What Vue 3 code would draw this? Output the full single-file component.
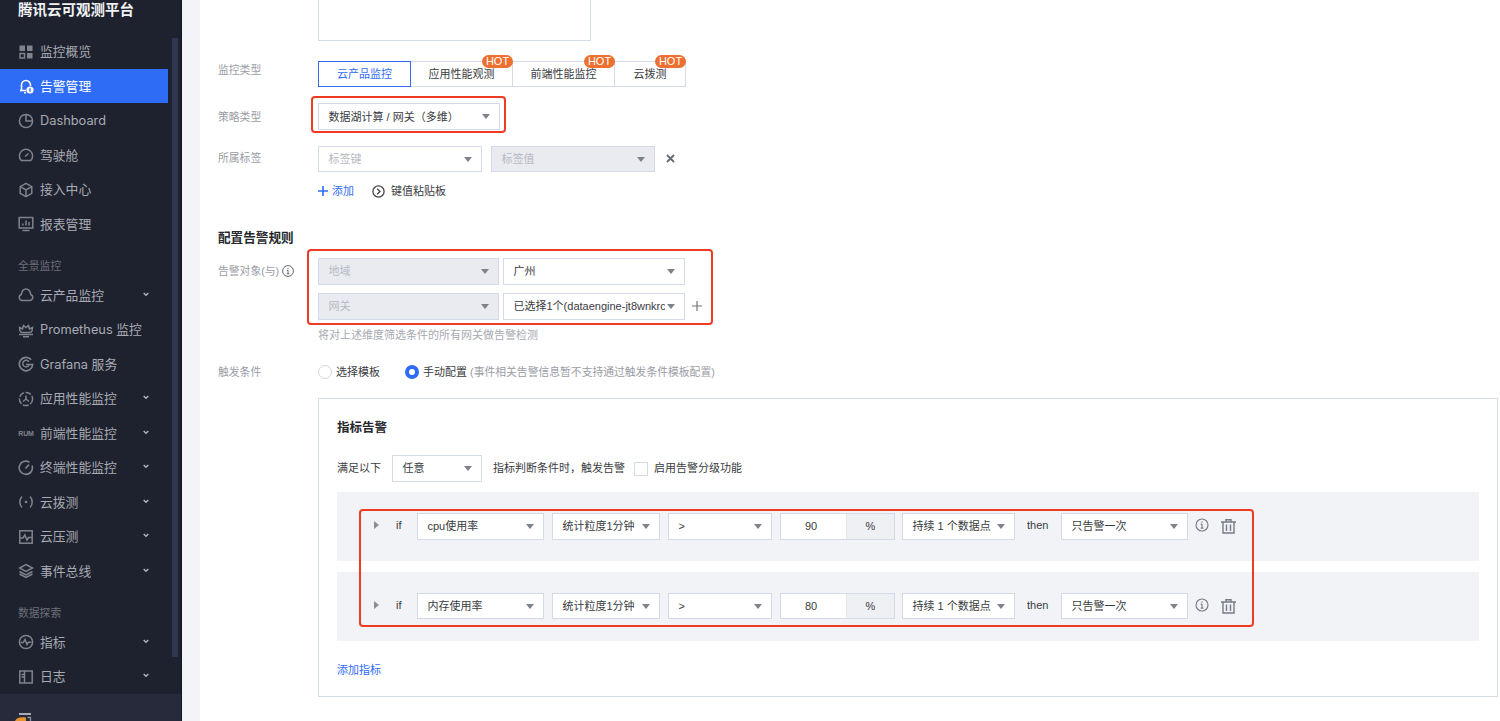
<script setup>
const group1 = [
  { t: '监控概览', i: 'grid' }, { t: '告警管理', i: 'bell', active: true }, { t: 'Dashboard', i: 'pie' },
  { t: '驾驶舱', i: 'gauge' }, { t: '接入中心', i: 'cube' }, { t: '报表管理', i: 'screen' }
]
const group2 = [
  { t: '云产品监控', i: 'cloud', arrow: true }, { t: 'Prometheus 监控', i: 'prom' }, { t: 'Grafana 服务', i: 'graf' },
  { t: '应用性能监控', i: 'apm', arrow: true }, { t: '前端性能监控', i: 'rum', arrow: true }, { t: '终端性能监控', i: 'dial', arrow: true },
  { t: '云拨测', i: 'probe', arrow: true }, { t: '云压测', i: 'pulse', arrow: true }, { t: '事件总线', i: 'layers', arrow: true }
]
const group3 = [
  { t: '指标', i: 'metric', arrow: true }, { t: '日志', i: 'log', arrow: true }
]
const sections = [
  { title: '', items: group1 }, { title: '全景监控', items: group2 }, { title: '数据探索', items: group3 }
]
const tabs = [
  { t: '云产品监控', w: 93, active: true }, { t: '应用性能观测', w: 102, hot: true },
  { t: '前端性能监控', w: 102, hot: true }, { t: '云拨测', w: 71, hot: true }
]
const rules = [
  { metric: 'cpu使用率', value: '90' }, { metric: '内存使用率', value: '80' }
]
</script>

<template>
  <div class="page">
    <aside class="side">
      <div class="brand">腾讯云可观测平台</div>
      <nav class="nav">
        <template v-for="s in sections" :key="s.title">
          <div v-if="s.title" class="sec">{{ s.title }}</div>
          <div v-for="it in s.items" :key="it.t" class="item" :class="{ on: it.active }">
            <span class="ico">
              <svg v-if="it.i !== 'rum'" width="16" height="16" viewBox="0 0 16 16" fill="none" stroke="currentColor" stroke-width="1.500">
                <template v-if="it.i === 'grid'">
                  <rect x="1.500" y="1.500" width="5.500" height="5.500" fill="currentColor" stroke="none" />
                  <rect x="9" y="1.500" width="5.500" height="5.500" fill="currentColor" stroke="none" />
                  <rect x="2" y="9.500" width="4.500" height="4.500" />
                  <rect x="9" y="9" width="5.500" height="5.500" fill="currentColor" stroke="none" />
                </template>
                <template v-else-if="it.i === 'bell'">
                  <path d="M2 12.500h1.500V7a4.500 4.500 0 0 1 9 0v1" stroke-width="1.600" />
                  <path d="M2 12.500h6M6 14.800h2" stroke-width="1.600" />
                  <circle cx="12" cy="12" r="3.600" fill="currentColor" stroke="none" />
                  <path d="M12 10.200v3.600" stroke="#2e6cf6" stroke-width="1.300" />
                </template>
                <template v-else-if="it.i === 'pie'">
                  <circle cx="8" cy="8" r="6.600" />
                  <path d="M8 1.500V8h6.500" />
                </template>
                <template v-else-if="it.i === 'gauge'">
                  <path d="M3.200 13.500h9.600a6.600 6.600 0 1 0-9.600 0z" />
                  <path d="M7 9.500l3.500-3" />
                </template>
                <template v-else-if="it.i === 'cube'">
                  <path d="M8 1.300l5.800 3.300v6.800L8 14.700l-5.800-3.300V4.600z" />
                  <path d="M2.200 4.600L8 8l5.800-3.400M8 8v6.700" />
                </template>
                <template v-else-if="it.i === 'screen'">
                  <rect x="1.200" y="1.500" width="13.600" height="10.500" />
                  <path d="M4.500 14.600h7M4.800 9.500V7.500M8 9.500V4.500M11 9.500V6" />
                </template>
                <template v-else-if="it.i === 'cloud'">
                  <path d="M4.300 13.500a3.100 3.100 0 0 1-1-6C3.800 4 5.700 2 8 2s4.200 2 4.700 5.500a3.100 3.100 0 0 1-1 6z" />
                </template>
                <template v-else-if="it.i === 'prom'">
                  <path d="M1.500 5.500L4.500 7 5.500 3.500 8 5.500l2.500-2L11.500 7l3-1.500-.5 3.500c-.5 1-1.500 1.500-2.500 1.500h-7C3.500 10.500 2.500 10 2 9z" />
                  <path d="M1 12.400h14M5 14.700h6" />
                </template>
                <template v-else-if="it.i === 'graf'">
                  <path d="M13.200 3.800A6.700 6.700 0 1 0 14.700 8.500H8" stroke-width="1.700" />
                  <path d="M10.800 5.800A3.300 3.300 0 1 0 11 9" />
                </template>
                <template v-else-if="it.i === 'apm'">
                  <circle cx="8" cy="8" r="6.600" stroke-dasharray="6 1.600" />
                  <path d="M8 4.500V8l-3 2.500M8 8l3 2.500" />
                </template>
                <template v-else-if="it.i === 'dial'">
                  <path d="M11.500 2.300A6.600 6.600 0 1 0 14 5.500" stroke-width="1.600" />
                  <path d="M7.500 8.500L11 4.500" stroke-width="1.600" />
                </template>
                <template v-else-if="it.i === 'probe'">
                  <path d="M4 2.500a8 8 0 0 0 0 11M12 2.500a8 8 0 0 1 0 11" />
                  <circle cx="8" cy="8" r="1.300" fill="currentColor" stroke="none" />
                </template>
                <template v-else-if="it.i === 'pulse'">
                  <rect x="1.800" y="1.800" width="12.400" height="12.400" />
                  <path d="M2 9h3l1.800-3 2.200 5 1.500-2.500H14" />
                </template>
                <template v-else-if="it.i === 'layers'">
                  <path d="M8 1.500l6.500 3.500L8 8.500 1.500 5z" />
                  <path d="M1.500 8.500L8 12l6.500-3.500M1.500 11L8 14.500l6.500-3.500" />
                </template>
                <template v-else-if="it.i === 'metric'">
                  <circle cx="8" cy="8" r="6.600" />
                  <path d="M2.500 8.500h2.800L7 5.500l2 5 1.300-2.200h3" />
                </template>
                <template v-else-if="it.i === 'log'">
                  <rect x="1.800" y="2" width="12.400" height="12" />
                  <path d="M6.500 2v12M3.500 5.500h3M3.500 8h3" />
                </template>
              </svg>
              <em v-else class="rum">RUM</em>
            </span>
            <span class="lbl" :class="{ latin: it.t === 'Dashboard' }">{{ it.t }}</span>
            <svg v-if="it.arrow" class="chev" width="6" height="5" viewBox="0 0 6 5" fill="none" stroke="currentColor" stroke-width="1.300">
              <path d="M.7 1l2.300 2.300L5.300 1" />
            </svg>
          </div>
        </template>
      </nav>
      <div class="foot">
        <svg width="20" height="8" viewBox="0 0 20 8" fill="none">
          <path d="M0 8c1-3 5-4.500 11-3.500V8z" fill="#e8912f" />
          <path d="M4 1h12" stroke="#a6aab4" stroke-width="2" />
          <path d="M12.500 4.500h3.500M15.500 4v4" stroke="#8d919c" stroke-width="1.300" />
        </svg>
      </div>
      <div class="thumb"></div>
    </aside>
    <div class="gutter"></div>

    <main class="main">
      <div class="area"></div>

      <div class="row r-tabs">
        <label>监控类型</label>
        <div class="tabs">
          <div v-for="t in tabs" :key="t.t" class="tab" :class="{ act: t.active }" :style="{ width: t.w + 'px' }">
            {{ t.t }}
            <b v-if="t.hot" class="hot">HOT</b>
          </div>
        </div>
      </div>

      <div class="row r-strategy">
        <label>策略类型</label>
        <div class="hl hl-a">
          <div class="sel w182"><span>数据湖计算 / 网关（多维）</span><i></i></div>
        </div>
      </div>

      <div class="row r-tag">
        <label>所属标签</label>
        <div class="ctl">
          <div class="sel w164 ph"><span>标签键</span><i></i></div>
          <div class="sel w164 ph dis"><span>标签值</span><i></i></div>
          <svg class="x" width="9" height="9" viewBox="0 0 9 9" stroke="#666a73" stroke-width="1.800"><path d="M1 1l7 7M8 1L1 8" /></svg>
        </div>
      </div>

      <div class="row r-add">
        <span></span>
        <div class="ctl">
          <span class="blue addlink">
            <svg width="10" height="10" viewBox="0 0 10 10" stroke="#2e6cf6" stroke-width="1.600"><path d="M5 0v10M0 5h10" /></svg>
            添加
          </span>
          <span class="paste">
            <svg width="13" height="13" viewBox="0 0 13 13" fill="none" stroke="#444" stroke-width="1.300"><circle cx="6.500" cy="6.500" r="5.600" /><path d="M5.200 3.800L8 6.500 5.200 9.200" /></svg>
            键值粘贴板
          </span>
        </div>
      </div>

      <h3 class="head">配置告警规则</h3>

      <div class="row r-obj">
        <label class="lab-i">告警对象(与)
          <svg width="12" height="12" viewBox="0 0 12 12" fill="none" stroke="#666a73" stroke-width="1"><circle cx="6" cy="6" r="5.400" /><path d="M6 5.200v3.500M6 3v1.200M4.800 5.300H6M4.800 8.800h2.500" /></svg>
        </label>
        <div class="obj">
          <div class="hl hl-b">
            <div class="obj-row">
              <div class="sel w181 ph dis"><span>地域</span><i></i></div>
              <div class="sel w182"><span>广州</span><i></i></div>
            </div>
            <div class="obj-row">
              <div class="sel w181 ph dis"><span>网关</span><i></i></div>
              <div class="sel w182"><span class="clip">已选择1个(dataengine-jt8wnkrc</span><i></i></div>
              <svg class="plus" width="10" height="10" viewBox="0 0 10 10" stroke="#777" stroke-width="1.200"><path d="M5 0v10M0 5h10" /></svg>
            </div>
          </div>
          <p class="hint">将对上述维度筛选条件的所有网关做告警检测</p>
        </div>
      </div>

      <div class="row r-trig">
        <label>触发条件</label>
        <div class="ctl radios">
          <span class="radio"></span><span class="rt">选择模板</span>
          <span class="radio checked"></span><span class="rt">手动配置 <small>(事件相关告警信息暂不支持通过触发条件模板配置)</small></span>
        </div>
      </div>

      <section class="panel">
        <h4>指标告警</h4>
        <div class="cond">
          <span class="ct">满足以下</span>
          <div class="sel w90"><span>任意</span><i></i></div>
          <span class="ct c1">指标判断条件时，触发告警</span>
          <span class="check"></span>
          <span class="ct">启用告警分级功能</span>
        </div>
        <div class="hl hl-c">
          <div v-for="r in rules" :key="r.value" class="rule">
            <span class="tri"></span>
            <span class="if">if</span>
            <div class="sel w127"><span>{{ r.metric }}</span><i></i></div>
            <div class="sel w108"><span>统计粒度1分钟</span><i></i></div>
            <div class="sel w104"><span>&gt;</span><i></i></div>
            <div class="num"><span>{{ r.value }}</span><b>%</b></div>
            <div class="sel w113"><span>持续 1 个数据点</span><i></i></div>
            <span class="then">then</span>
            <div class="sel w127"><span>只告警一次</span><i></i></div>
            <svg class="info" width="14" height="14" viewBox="0 0 14 14" fill="none" stroke="#777b85" stroke-width="1.100"><circle cx="7" cy="7" r="6" /><path d="M7 6v4M7 3.500v1.300M5.700 6.100H7M5.700 10.100h2.700" /></svg>
            <svg class="trash" width="15" height="15" viewBox="0 0 15 15" fill="none" stroke="#777b85" stroke-width="1.400"><path d="M0 3h15M5 3V.8h5V3M2 3v11h11V3M5.500 5.500v6.500M9.500 5.500v6.500" /></svg>
          </div>
        </div>
        <a class="blue more">添加指标</a>
      </section>
    </main>
  </div>
</template>

<style scoped>
.page { display: flex; height: 721px; overflow: hidden; font-family: "Liberation Sans", "Noto Sans CJK SC", sans-serif; font-size: 11px; color: #3a3c42; background: #fff; }
.side { position: relative; width: 182px; flex: none; display: flex; flex-direction: column; background: #1e212e; border-right: 1px solid #14161f; box-sizing: border-box; font-family: Inter, "Noto Sans CJK SC", sans-serif; color: #a8abb3; }
.brand { height: 34.250px; padding-left: 18px; line-height: 18px; font-size: 14.500px; font-weight: 700; color: #f0f1f3; font-family: "Noto Sans CJK SC", sans-serif; flex: none; }
.nav { flex: 1; overflow: hidden; }
.sec { height: 36.500px; padding: 17px 0 0 18px; box-sizing: border-box; font-size: 10.800px; line-height: 18px; color: #6c6f79; }
.item { position: relative; display: flex; align-items: center; height: 34.500px; width: 168px; padding-left: 18px; box-sizing: border-box; font-size: 12.800px; }
.item.on { background: #2e6cf6; color: #fff; }
.lbl { padding-bottom: 1.500px; }
.lbl.latin { padding-bottom: 0; }
.ico { width: 16px; height: 16px; margin-right: 6px; color: #80838c; flex: none; display: flex; align-items: center; justify-content: center; }
.item.on .ico { color: #fff; }
.rum { font-family: "Liberation Sans", sans-serif; font-size: 7px; font-weight: 700; font-style: normal; color: #80838c; letter-spacing: -.2px; }
.chev { position: absolute; left: 143px; top: 14px; color: #b6b8bf; }
.foot { height: 27px; flex: none; background: #262a3b; padding: 19px 0 0 15px; box-sizing: border-box; overflow: hidden; }
.foot svg { display: block; }
.thumb { position: absolute; left: 172px; top: 38px; width: 6px; height: 619px; background: #2e3650; }
.gutter { width: 18px; flex: none; background: #f3f4f8; }

.main { flex: 1; min-width: 0; padding-left: 18px; box-sizing: border-box; }
.area { margin-left: 100px; width: 273px; height: 41px; border: 1px solid #d5dae8; border-top: 0; box-sizing: border-box; background: #fff; }
label { color: #9a9da6; font-size: 10.800px; line-height: 18px; }
.row { display: grid; grid-template-columns: 100px 1fr; }
.r-tabs { margin-top: 20px; }
.tabs { display: flex; }
.tab { position: relative; height: 26px; line-height: 25px; border: 1px solid #d5dae8; border-left: 0; box-sizing: border-box; text-align: center; color: #3a3c42; }
.tab.act { border: 1px solid #2e6cf6; color: #2e6cf6; }
.hot { position: absolute; right: -1px; top: -7px; width: 31px; height: 13px; line-height: 13px; border-radius: 7px; background: #ee7030; color: #fff; font-size: 11px; font-weight: 400; text-align: center; }
.r-strategy { margin-top: 16px; }
.r-strategy label { height: 26px; line-height: 28px; }
.r-strategy .sel { line-height: 26px; }
.r-tag { margin-top: 16px; }
.r-tag label { line-height: 25px; }
.r-tag .sel { line-height: 24px; }
.ctl { display: flex; align-items: center; gap: 9.500px; }
.sel { position: relative; height: 26.500px; flex: none; border: 1px solid #d5dae8; box-sizing: border-box; background: #fff; padding-left: 9.500px; line-height: 25px; font-size: 11px; color: #3a3c42; white-space: nowrap; overflow: hidden; }
.sel i { position: absolute; right: 9px; top: 10px; border: 4px solid transparent; border-top: 5px solid #7e828b; border-bottom: 0; }
.sel.ph { color: #b7bac2; }
.sel.dis { background: #e9ebf1; }
.w182 { width: 182px; }
.w181 { width: 181px; }
.w164 { width: 163.500px; }
.w90 { width: 90px; }
.w127 { width: 127px; }
.w108 { width: 108px; }
.w104 { width: 104px; }
.w113 { width: 113px; }
.clip { display: block; width: 151px; overflow: hidden; }
.x { margin-left: 2px; }
.r-add { margin-top: 10px; height: 18px; line-height: 18px; }
.r-add .ctl { gap: 18px; }
.addlink { display: inline-flex; align-items: center; gap: 4px; }
.paste { display: inline-flex; align-items: center; gap: 6px; color: #3a3c42; }
.blue { color: #2e6cf6; }
.head { margin: 29px 0 0; height: 18px; font-size: 12.600px; line-height: 18px; font-weight: 700; color: #26282d; }
.r-obj { margin-top: 11px; }
.lab-i { display: flex; align-items: center; gap: 3px; height: 26px; }
.hl { position: relative; }
.hl::after { content: ""; position: absolute; border: 2.500px solid #ef3b24; border-radius: 4px; box-sizing: border-box; pointer-events: none; }
.hl-a { width: 182px; }
.hl-a::after { inset: -7px -6px -3px -7px; }
.hl-b { width: 367px; display: flex; flex-direction: column; gap: 8.500px; }
.hl-b::after { inset: -9px -28px -5px -11px; }
.hl-c { width: 1142px; margin-top: 10px; display: flex; flex-direction: column; gap: 11px; }
.hl-c::after { inset: 17px 225px 14px 22px; }
.obj-row { display: flex; gap: 4px; position: relative; }
.plus { position: absolute; left: 374px; top: 8px; }
.hint { margin: 7px 0 0; line-height: 16px; color: #a7aab2; }
.r-trig { margin-top: 20px; line-height: 18px; }
.radios { gap: 4px; }
.radio { width: 14px; height: 14px; border: 1px solid #d0d4e0; border-radius: 50%; box-sizing: border-box; background: #fff; flex: none; }
.radio.checked { border: 4px solid #2e6cf6; }
.rt { margin-right: 21px; }
.rt small { font-size: 10.800px; color: #9a9da6; }
.panel { margin: 17px 0 0 100px; width: 1180px; height: 299px; border: 1px solid #d5dae8; padding: 20px 0 0 18px; box-sizing: border-box; position: relative; }
h4 { margin: 0; font-size: 12.500px; line-height: 18px; color: #26282d; font-weight: 700; }
.cond { display: flex; align-items: center; height: 27px; margin-top: 18.500px; }
.ct { margin-top: -3px; }
.cond .sel { margin: 0 11px 0 11px; }
.c1 { margin-right: 9px; }
.check { width: 14px; height: 14px; border: 1px solid #d5dae8; box-sizing: border-box; margin-right: 6px; }
.rule { display: flex; align-items: flex-start; height: 69px; padding: 21px 0 0 37px; box-sizing: border-box; background: #f2f3f7; gap: 8px; }
.rule + .rule { padding-top: 20.500px; }
.tri { width: 0; height: 0; margin: 8px 0 0 0; border: 4px solid transparent; border-left: 5px solid #8a8d96; border-right: 0; }
.if { width: 14px; line-height: 25px; margin-left: 9px; margin-right: -1px; color: #3a3c42; }
.num { display: flex; width: 115px; height: 26.500px; border: 1px solid #d5dae8; box-sizing: border-box; background: #fff; text-align: center; line-height: 25px; margin-right: -1px; }
.num span { flex: 1; padding-right: 5px; }
.num b { width: 47px; font-weight: 400; background: #eff0f3; border-left: 1px solid #e3e5ec; }
.then { width: 23px; line-height: 25px; margin: 0 3px 0 4px; }
.info { margin: 5px 0 0 -1px; }
.trash { margin: 6px 0 0 4px; }
.more { display: block; margin-top: 20px; line-height: 18px; }
</style>

<style>
html, body { margin: 0; overflow: hidden; background: #fff; }
</style>
